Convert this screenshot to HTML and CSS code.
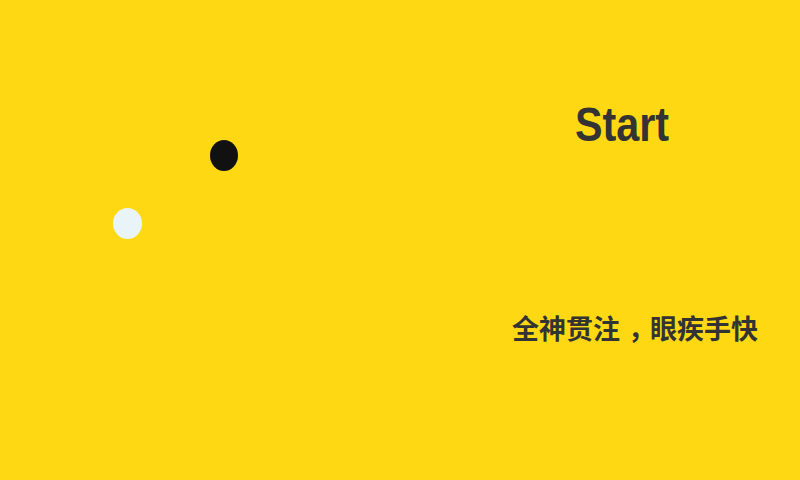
FILE: index.html
```html
<!DOCTYPE html>
<html>
<head>
<meta charset="utf-8">
<link rel="stylesheet" href="styles.css">
</head>
<body>
<div class="screen">
  <div class="ball ball-black"></div>
  <div class="ball ball-white"></div>
  <div class="panel">
    <div class="start"><span class="start-text">Start</span></div>
    <div class="slogan">全神贯注<span class="comma">，</span>眼疾手快</div>
  </div>
</div>
</body>
</html>
```
FILE: styles.css
```css
html, body {
  margin: 0;
  padding: 0;
}
.screen {
  position: relative;
  width: 800px;
  height: 480px;
  background: #fed913;
  overflow: hidden;
  display: flex;
  justify-content: flex-end;
}
.ball {
  position: absolute;
  border-radius: 50%;
}
.ball-black {
  left: 210px;
  top: 140px;
  width: 28px;
  height: 31px;
  background: #111111;
}
.ball-white {
  left: 113px;
  top: 208px;
  width: 29px;
  height: 31px;
  background: #e9f4f8;
}
.panel {
  width: 300px;
  display: flex;
  flex-direction: column;
  padding-top: 100px;
}
.start {
  font-family: "Liberation Sans", Arial, sans-serif;
  font-weight: bold;
  font-size: 48px;
  line-height: 50px;
  color: #333333;
  padding-left: 75px;
}
.start-text {
  display: inline-block;
  transform: scaleX(0.86);
  transform-origin: left center;
}
.slogan {
  margin-top: 160px;
  font-family: "Noto Sans CJK SC", sans-serif;
  font-weight: bold;
  font-size: 27px;
  line-height: 36px;
  color: #333333;
  padding-left: 12px;
}
.comma {
  display: inline-block;
  box-sizing: border-box;
  width: 30px;
  padding-left: 8px;
  font-feature-settings: "halt";
}
```
